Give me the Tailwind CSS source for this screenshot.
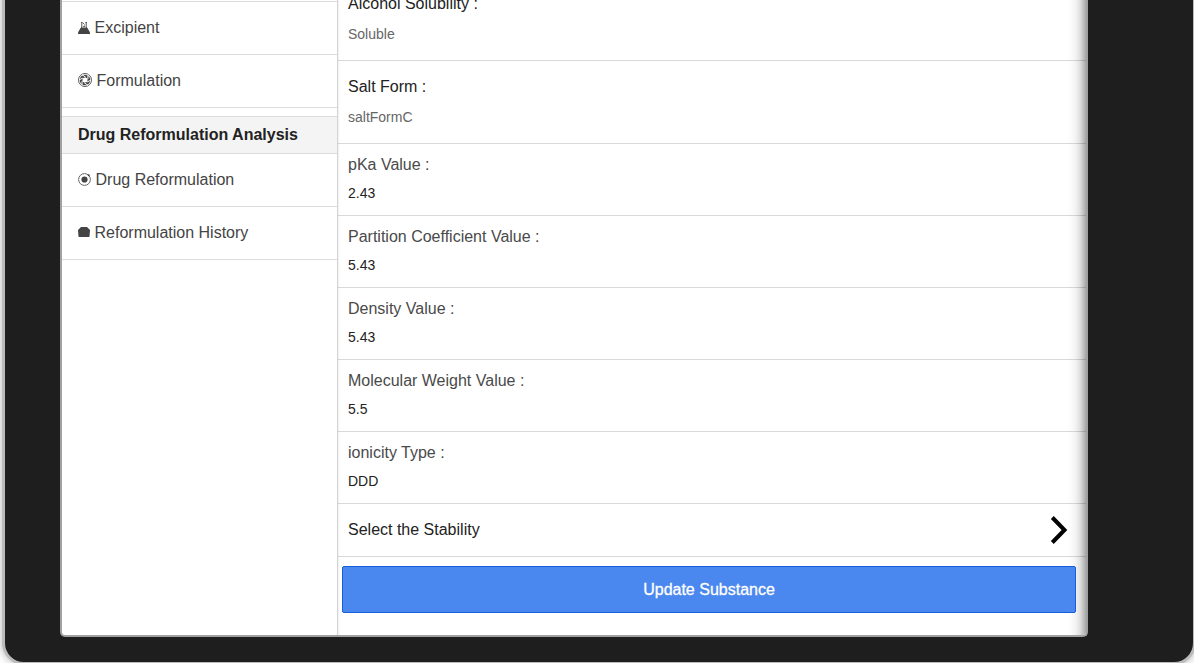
<!DOCTYPE html>
<html lang="en">
<head>
<meta charset="utf-8">
<title>Substance</title>
<script src="https://cdn.jsdelivr.net/npm/@tailwindcss/browser@4"></script>
</head>
<body class="h-[663px] w-[1194px] overflow-hidden bg-white font-['Liberation_Sans',Arial,sans-serif] text-base">
<div class="flex h-[663px] w-[1194px] items-end overflow-hidden">
  <div class="-mb-[2px] ml-[2px] flex h-[765px] w-[1194px] shrink-0 items-end rounded-[22px] border-[3px] border-[#bbbbbb] bg-[#1e1e1e] pb-[25px] pl-[55px] shadow-[0_0_10px_rgba(0,0,0,0.3)]">
    <div class="flex h-[637px] w-[1028px] overflow-hidden rounded-b-[5px] border-x-2 border-b-2 border-[#a0a2a2] bg-white">
      <nav class="w-[275px] shrink-0 text-[#444]">
        <div class="h-[2px] border-b border-[#dddddd]"></div>
        <div class="flex h-[53px] items-center border-b border-[#dddddd] pl-4">
          <svg class="mb-[1px] mr-[4.5px] h-3 w-3" viewBox="0 0 12 12"><path d="M3 .5h1.500M7.500 .5H9M3.800 0v5L.5 10.500M8.200 0v5l3.300 5.500" fill="none" stroke="#555" stroke-width="1"/><path d="M3 5.500h6L12 11v1H0v-1z" fill="#444"/><path d="M5 1h1v1H5zM6 2.500h1v1H6zM5 4h2v1H5z" fill="#666"/></svg>
          <span>Excipient</span>
        </div>
        <div class="flex h-[53px] items-center border-b border-[#dddddd] pl-4">
          <svg class="mb-[2px] mr-[4.5px] h-[14px] w-[14px]" viewBox="0 0 14 14" fill="none"><circle cx="7" cy="7" r="6.500" stroke="#444" stroke-width=".9"/><circle cx="7" cy="7" r="3.900" stroke="#444" stroke-width="2.800"/><path d="M3.900 1.600 7.800 4.300M10.100 1.600 9.800 6.300M13.200 7 9 9M10.100 12.400 6.200 9.700M3.900 12.400 4.200 7.700M.8 7 5 5" stroke="#fff" stroke-width="1"/></svg>
          <span>Formulation</span>
        </div>
        <div class="mt-2 flex h-[38px] items-center border-y border-[#dddddd] bg-[#f4f4f4] pl-4 font-bold text-[#222]">Drug Reformulation Analysis</div>
        <div class="flex h-[53px] items-center border-b border-[#dddddd] pl-4">
          <svg class="mb-[2px] mr-[4.5px] h-[13px] w-[13px]" viewBox="0 0 13 13"><circle cx="6.500" cy="6.500" r="5.900" fill="none" stroke="#666" stroke-width="1"/><circle cx="6.500" cy="6.500" r="3.100" fill="#444"/><circle cx="10.700" cy="2.300" r="1" fill="#444"/></svg>
          <span>Drug Reformulation</span>
        </div>
        <div class="flex h-[53px] items-center border-b border-[#dddddd] pl-4">
          <svg class="mb-[2px] mr-[4.5px] h-3 w-3" viewBox="0 0 12 12" fill="#444"><path d="M3 1h6l2 2H1z"/><path d="M1 3h10l1 1-.5 6.500-.5.5H1l-.5-.5L0 4z"/></svg>
          <span>Reformulation History</span>
        </div>
      </nav>
      <main class="w-[749px] shrink-0 border-l border-[#d4d4d4] bg-[linear-gradient(to_left,#a8a8a8_0px,#c4c4c4_3px,#e0e0e0_6px,#f2f2f2_10px,#fafafa_14px,transparent_19px),linear-gradient(to_right,#f0f0f0_0px,#ffffff_2px)] text-[#222]">
        <div class="-mt-[22px] h-[83px] border-b border-black/15 pl-[10px] pt-[14px]">
          <div class="leading-6">Alcohol Solubility :</div>
          <div class="mt-2 text-sm leading-5 text-[#666]">Soluble</div>
        </div>
        <div class="h-[83px] border-b border-black/15 pl-[10px] pt-[14px]">
          <div class="leading-6">Salt Form :</div>
          <div class="mt-2 text-sm leading-5 text-[#666]">saltFormC</div>
        </div>
        <div class="h-[72px] border-b border-black/15 pl-[10px] pt-[9px]">
          <div class="leading-6 text-[#4a4a4a]">pKa Value :</div>
          <div class="mt-[6px] text-sm leading-5">2.43</div>
        </div>
        <div class="h-[72px] border-b border-black/15 pl-[10px] pt-[9px]">
          <div class="leading-6 text-[#4a4a4a]">Partition Coefficient Value :</div>
          <div class="mt-[6px] text-sm leading-5">5.43</div>
        </div>
        <div class="h-[72px] border-b border-black/15 pl-[10px] pt-[9px]">
          <div class="leading-6 text-[#4a4a4a]">Density Value :</div>
          <div class="mt-[6px] text-sm leading-5">5.43</div>
        </div>
        <div class="h-[72px] border-b border-black/15 pl-[10px] pt-[9px]">
          <div class="leading-6 text-[#4a4a4a]">Molecular Weight Value :</div>
          <div class="mt-[6px] text-sm leading-5">5.5</div>
        </div>
        <div class="h-[72px] border-b border-black/15 pl-[10px] pt-[9px]">
          <div class="leading-6 text-[#4a4a4a]">ionicity Type :</div>
          <div class="mt-[6px] text-sm leading-5">DDD</div>
        </div>
        <div class="flex h-[53px] items-center justify-between border-b border-black/15 pl-[10px] pr-[18px]">
          <span>Select the Stability</span>
          <svg class="h-[28px] w-[18px]" viewBox="0 0 18 28" fill="none" stroke="#000" stroke-width="4"><path d="M2.300 1.500 14.500 14 2.300 26.500"/></svg>
        </div>
        <button class="ml-1 mt-[9px] block h-[47px] w-[734px] rounded-[2px] border border-[#145fd7] bg-[#4a87ee] text-white [-webkit-text-stroke:0.3px_white]">Update Substance</button>
      </main>
    </div>
  </div>
</div>
</body>
</html>
